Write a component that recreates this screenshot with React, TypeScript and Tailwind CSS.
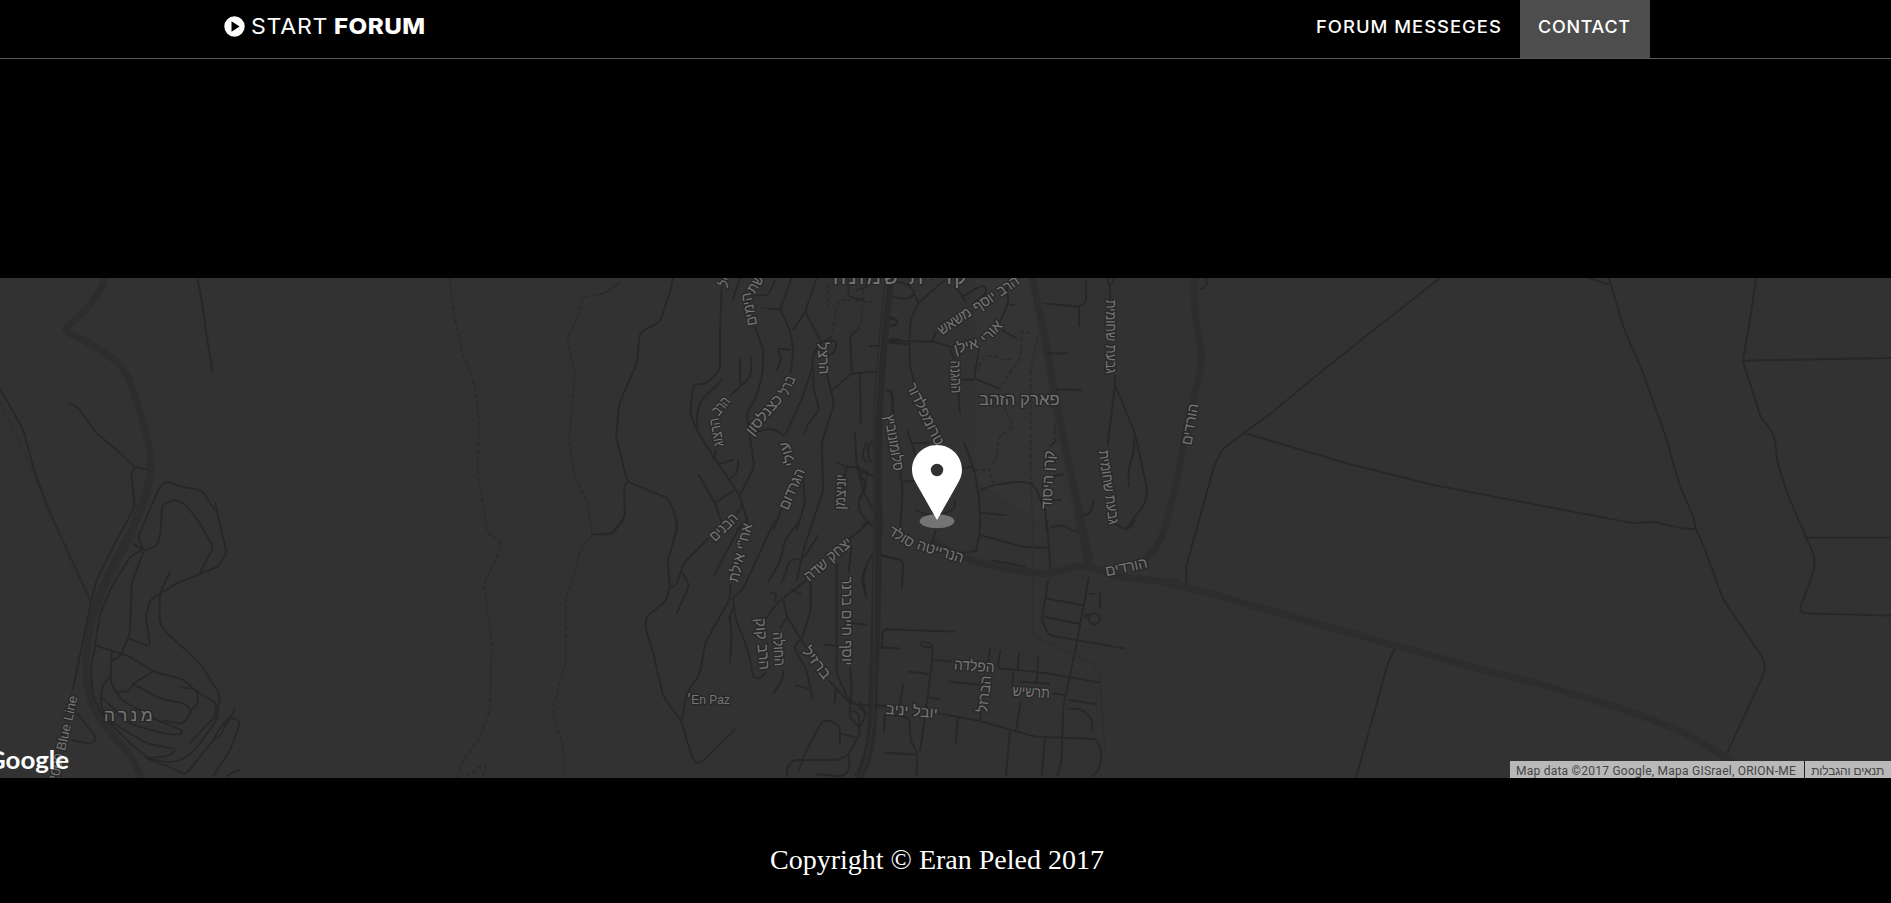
import React from "react";

type Road = { kind?: "thin" | "path" | "faint" | "main" | "trunk"; pts: string[] };
type Label = [text: string, x: number, y: number, rotation: number, length: number, size?: number];
type Tile = { x: number; y: number; roads: Road[]; labels: Label[] };

/** Turns "x,y x,y ..." into a path whose corners are softened. */
function soften(points: string, radius = 26): string {
  const p = points.trim().split(/\s+/).map((s) => s.split(",").map(Number));
  let d = `M${p[0][0]} ${p[0][1]}`;
  for (let i = 1; i < p.length - 1; i++) {
    const [a, b, c] = [p[i - 1], p[i], p[i + 1]];
    const la = Math.hypot(a[0] - b[0], a[1] - b[1]) || 1;
    const lc = Math.hypot(c[0] - b[0], c[1] - b[1]) || 1;
    const ra = Math.min(la / 2, radius) / la;
    const rc = Math.min(lc / 2, radius) / lc;
    d += `L${b[0] + (a[0] - b[0]) * ra} ${b[1] + (a[1] - b[1]) * ra}`;
    d += `Q${b[0]} ${b[1]} ${b[0] + (c[0] - b[0]) * rc} ${b[1] + (c[1] - b[1]) * rc}`;
  }
  const e = p[p.length - 1];
  return d + `L${e[0]} ${e[1]}`;
}

const STYLE = {
  thin: { stroke: "#272727", strokeWidth: 5.5, dash: undefined, r: 14 },
  path: { stroke: "#292929", strokeWidth: 4, dash: "13 8", r: 14 },
  faint: { stroke: "#2e2e2e", strokeWidth: 4, dash: undefined, r: 14 },
  main: { stroke: "#2d2d2d", strokeWidth: 21, dash: undefined, r: 60 },
  trunk: { stroke: "#2a2a2a", strokeWidth: 28, dash: undefined, r: 80 },
} as const;

const TILES: Tile[] = [
  {
    x: 0,
    y: 270,
    roads: [
      { kind: "main", pts: ["320,10 300,65 240,140 195,170 200,188 290,230 370,290 405,370 440,500 452,540 450,640 400,770 320,920 280,1020 262,1120 255,1220 275,1310 330,1390 390,1450 425,1525", "452,540 450,650 395,790 320,930 282,1030"] },
      {
        pts: [
          "592,24 605,90 622,210 638,306",
          "0,355 70,480 105,610 155,740 270,990",
          "203,399 235,412 285,485 350,540 405,592 440,598",
          "405,592 393,610 405,710 350,810 290,930 272,1000 235,1180 218,1260",
          "415,800 440,740 480,650 500,632 540,650 605,660 645,722",
          "645,698 655,740 680,850 655,890 530,940 450,990 437,1040 452,1130 385,1105",
          "415,800 430,843 470,828 482,790 486,705 520,688 555,700 600,760 640,832 598,912",
          "398,820 430,840 395,855 340,940 300,1030 285,1128 272,1200 280,1280 310,1340 380,1410 450,1470 520,1495 555,1515 640,1410",
          "430,845 395,940 390,1090 360,1160 335,1172",
          "510,905 480,970 478,1050 490,1080 600,1180 660,1275 650,1350 585,1440 545,1470 500,1478 440,1462",
          "285,1126 390,1160 460,1205 550,1228 590,1265 650,1300 645,1340 568,1420",
          "335,1140 332,1240 365,1290 470,1350 550,1382 540,1395 490,1390 390,1362 305,1282",
          "460,1205 400,1240 385,1265 350,1265",
          "395,1240 480,1285 560,1302 575,1325 550,1362 490,1352",
          "540,1252 590,1258 595,1300 570,1325",
          "330,1220 310,1240 300,1290 315,1345 440,1420 530,1438 510,1458 440,1465",
          "232,1330 290,1405 275,1422 215,1410",
          "640,1410 655,1380 690,1340 722,1355 690,1440 640,1518",
          "640,1405 655,1405 705,1318",
          "680,1520 695,1508 720,1500",
        ],
      },
      { kind: "faint", pts: ["0,395 80,560 150,735 265,985", "218,1260 205,1290"] },
    ],
    labels: [["מנרה", 385, 1336, 0, 146, 52], ["2000 Blue Line", 190, 1408, -77, 268, 40]],
  },
  {
    x: 420,
    y: 270,
    roads: [
      {
        kind: "path",
        pts: [
          "88,24 105,150 125,240 165,350 178,460 172,600 203,790 248,822 192,940 215,1120 210,1320 180,1400 125,1480 112,1524",
          "600,35 550,72 490,80 480,125 442,205 465,310 447,510 465,620 500,690 517,794",
          "517,794 482,835 465,910 438,980 437,1180 400,1310 400,1345 428,1420 435,1524",
          "140,1520 185,1485 200,1490 188,1520",
        ],
      },
      { pts: ["517,793 575,793 615,740 612,650 622,636"] },
    ],
    labels: [],
  },
  {
    x: 600,
    y: 270,
    roads: [
      { kind: "trunk", pts: ["868,20 850,200 832,440 833,800"] },
      {
        pts: [
          "218,24 212,60 180,155 120,188 110,280 58,400 48,500 82,635 205,685 225,730 232,790",
          "365,50 360,180 360,300 320,340 280,345 270,430 290,480 340,560 415,670 440,745 445,780",
          "365,330 300,395 290,440 292,485",
          "420,265 420,345", "455,260 452,320 390,378",
          "465,170 490,240 488,310 470,380 440,430 448,490 463,590 420,675",
          "448,490 515,475 555,498 610,375 635,300 640,250 665,218",
          "355,583 402,568", "415,568 412,608 385,630", "345,538 348,560 338,565",
          "295,612 345,700 365,760", "345,698 400,662",
          "575,24 540,118 570,180 580,240 572,310",
          "460,76 505,76 525,30", "500,115 540,118", "420,24 398,90",
          "650,24 615,125 665,218", "615,125 580,180",
          "530,300 545,270 530,235 570,240",
          "640,290 640,355 658,420 625,460 612,492",
          "678,215 710,210 706,245 680,260", "680,310 702,400 665,520 670,660 630,780",
          "695,362 755,310 830,305", "755,305 750,195 780,175", "665,218 695,200",
          "780,310 782,460", "765,485 770,590 820,618", "708,575 740,592 770,590",
          "745,30 745,80 790,90", "770,60 795,55 810,30",
          "770,590 800,650 775,690 780,730 820,772", "740,592 730,640", "775,595 788,660 835,750",
          "820,510 803,530 808,575 822,578", "860,360 878,365 880,440", "808,228 850,228",
          "610,625 615,700 590,780", "545,715 520,780", "430,700 380,780", "445,745 410,780",
          "870,145 892,150 890,165 872,168", "868,205 900,210", "868,215 900,219",
        ],
      },
      { kind: "path", pts: ["10,72 65,35", "685,40 685,110", "790,60 785,150 775,175", "820,96 715,88 695,195", "460,108 500,115"] },
    ],
    labels: [
      ["יל", 375, 37, -62, 30],
      ["שת", 466, 42, -58, 54],
      ["הימים", 447, 118, -102, 100],
      ["הרצל", 670, 265, 87, 96],
      ["ברל", 562, 346, -68, 58],
      ["כצנלסון", 492, 434, -50, 144],
      ["הרב", 363, 408, -50, 58],
      ["הרצוג", 349, 487, -100, 86],
      ["עולי", 562, 552, -106, 74],
      ["הגרדום", 576, 657, -66, 130],
      ["יוניצמן", 722, 666, -88, 106],
      ["סלומונוביץ", 882, 518, 80, 170],
      ["הבנים", 371, 771, -44, 100],
    ],
  },
  {
    x: 600,
    y: 520,
    roads: [
      { kind: "trunk", pts: ["833,-10 828,300 818,560 815,650 800,720 775,775"] },
      {
        pts: [
          "0,42 35,42 70,0", "232,0 230,30 202,125 210,200 200,240 140,290 135,320 160,400 190,530 245,605 275,710 290,733 310,722 407,627",
          "245,605 260,520 300,460 315,370 390,235 392,190",
          "325,55 250,130 230,195 210,202", "245,155 268,195 230,280",
          "420,20 342,165", "525,0 430,205 395,238", "400,238 405,290 440,380 455,440 458,470 480,478 500,455",
          "388,285 395,340 390,428", "400,262 386,295",
          "600,0 555,60 540,125 505,185", "655,45 610,115 570,120 545,190", "640,0 610,90 590,185",
          "810,5 745,60", "620,180 530,250 495,300", "575,208 605,225", "512,218 530,222 525,245",
          "550,240 560,290 605,360 620,385", "632,180 632,270 605,360 582,375 590,400 620,450 637,535",
          "560,295 540,325", "550,450 548,480 520,520", "585,495 625,505",
          "710,130 710,460 745,540 770,555 900,558", "685,480 750,550", "755,80 745,160", "750,440 755,500 748,590 778,622",
          "708,505 703,550", "675,375 712,376", "752,308 800,315",
          "800,140 785,180 800,235", "845,105 900,118", "900,328 848,328 845,380", "830,380 900,386",
          "775,560 800,580", "748,575 775,575 780,640 745,705 715,720 580,720 562,740 560,772",
          "595,755 615,700 665,605 690,600 720,620 720,670", "720,640 765,652", "745,705 750,745 730,770 645,762",
          "855,580 852,635", "855,698 900,702", "785,15 805,5",
        ],
      },
    ],
    labels: [
      ['אח"י אילת', 421, 98, -76, 180],
      ["הרב קוק", 487, 372, 85, 156],
      ["החולה", 536, 387, 87, 102],
      ["ברזיל", 650, 428, 52, 110],
      ["יצחק שדה", 684, 118, -41, 174],
      ["יוסף חיים ברנר", 742, 303, 90, 266],
      ["׳En Paz", 325, 538, 0, 130, 39],
    ],
  },
  {
    x: 860,
    y: 270,
    roads: [
      { kind: "main", pts: ["515,20 545,150 595,430 650,690 690,870"] },
      {
        pts: [
          "255,30 175,98 152,150 148,215 150,290 165,345", "95,30 150,45 175,98", "95,80 135,88 158,80 165,60",
          "85,212 225,215 285,235", "85,218 148,222", "215,215 228,185",
          "285,45 320,100", "305,80 350,55 375,45 380,70 345,95", "440,40 445,100 415,165", "445,103 465,105", "425,180 470,205",
          "270,240 285,270", "358,235 342,325 418,355", "300,330 345,328", "295,365 300,430",
          "90,140 115,150 110,165 92,168", "75,360 95,365 98,440", "20,0 20,50",
          "550,100 660,110 678,98 678,30", "657,112 657,170", "560,250 622,250", "590,358 665,360",
          "740,24 750,50 750,90", "765,24 750,50", "765,312 765,345 742,530", "765,345 825,490 862,660 855,700 800,775",
          "825,490 820,550 805,600 807,650", "140,480 160,530 165,560", "155,520 210,518", "120,600 128,660 120,780",
          "130,635 170,632", "312,515 345,610 358,690 360,780", "305,595 335,590", "358,662 400,645 480,635 515,640 535,668 545,700",
          "362,728 440,736", "285,690 282,720 220,740 165,720", "558,690 605,690", "580,618 610,612", "655,738 690,732 702,690",
          "590,510 570,530", "555,712 560,780", "20,515 5,560 20,578", "0,605 40,620", "20,620 0,690",
        ],
      },
      {
        kind: "path",
        pts: [
          "512,190 485,180 482,265 455,300 418,355 440,430 462,470 415,500 412,560 385,600 400,640",
          "455,265 430,272 400,255 370,260 355,300", "512,300 512,640", "585,460 585,510", "345,600 385,600",
        ],
      },
      { kind: "faint", pts: ["535,190 512,300", "512,640 520,780"] },
    ],
    labels: [
      ["קריית שמונה", 119, 23, 0, 400, 62],
      ["הרב יוסף", 408, 72, -34, 157],
      ["משאש", 283, 153, -34, 112],
      ["אילן", 318, 228, -16, 74],
      ["אורי", 394, 185, -47, 74],
      ["ההגנה", 287, 321, 88, 98],
      ["טרומפלדור", 196, 432, 64, 202],
      ["פארק הזהב", 478, 389, 0, 242, 49],
      ["קרן היסוד", 564, 630, -87, 176],
      ["גבעת שחומית", 753, 200, 90, 222],
      ["גבעת שחומית", 746, 652, 82, 224],
    ],
  },
  {
    x: 860,
    y: 520,
    roads: [
      { kind: "main", pts: ["210,60 310,115 420,145 570,165 640,138 690,140 760,168 850,180 960,187"] },
      { kind: "main", pts: ["650,-60 665,40 685,140"] },
      {
        pts: [
          "230,20 215,75", "360,0 358,45 348,95", "300,100 348,92", "360,45 485,80 565,84", "560,0 572,150", "570,22 615,15 632,32 655,34",
          "395,122 498,140", "65,108 130,122 126,205", "35,105 8,160 18,225",
          "565,180 545,300 565,345 795,386", "555,234 668,256", "552,290 660,312", "687,170 665,290 650,370 610,560 605,720 592,770",
          "685,222 705,222", "720,218 720,265", "672,282 692,287", "672,290 690,297",
          "703,279 716,284 721,297 716,309 703,314 690,309 685,297 690,284 705,279",
          "65,385 68,328 285,335", "60,382 118,386", "217,420 217,370 182,365 185,380 212,382", "217,418 275,425",
          "217,418 203,530 180,695", "145,455 205,462", "130,490 120,555", "205,532 242,538", "268,485 360,495",
          "390,385 385,425", "422,390 412,445 475,450 560,460 722,488", "478,398 472,450", "535,408 530,490", "460,455 458,500",
          "480,485 570,492", "578,520 618,525", "482,545 468,630", "625,540 712,553", "620,566 665,568 695,595 697,632",
          "50,556 80,560", "235,580 355,602 525,650 710,657 725,700 720,745 695,770", "362,575 360,600",
          "450,632 438,770", "555,657 545,770", "293,592 288,670", "75,580 72,638", "78,580 148,595 152,665 172,695 170,770", "75,698 170,704",
          "760,5 790,28 810,25 825,0", "0,545 20,580 0,620",
        ],
      },
      { kind: "faint", pts: ["520,0 520,350 590,380 700,430 720,470 735,690"] },
    ],
    labels: [
      ["סולד", 124, 50, 32, 82],
      ["הנרייטה", 241, 94, 17, 144],
      ["הורדים", 799, 141, -12, 128],
      ["הפלדה", 343, 438, 4, 122],
      ["הברזל", 373, 522, -84, 110],
      ["תרשיש", 514, 516, 4, 112],
      ["יובל יניב", 155, 573, 5, 156],
    ],
  },
  {
    x: 1140,
    y: 270,
    roads: [
      { kind: "main", pts: ["162,20 165,150 185,230 182,310 150,420 105,660 65,810 30,855 0,885"] },
      { kind: "main", pts: ["80,941 130,949 1080,1214 1200,1242 1340,1284 1500,1335 1630,1385 1780,1475"] },
      { pts: ["900,24 720,165 500,340 400,425 310,490 245,540 222,590 138,890 140,940", "310,488 620,580 880,645 1080,683 1200,706", "765,1136 745,1175 648,1524", "200,24 200,50 180,58"] },
    ],
    labels: [["הורדים", 150, 463, -80, 126]],
  },
  {
    x: 1500,
    y: 270,
    roads: [
      {
        pts: [
          "255,20 327,44", "325,20 375,185 430,310 500,510 540,650 580,740 587,777 612,830 670,990 790,1165 795,1190 790,1215 682,1448",
          "120,706 395,759 465,756 550,776 587,777",
          "768,24 750,150 728,272 785,450 812,475 825,510 833,580 862,670 918,802 940,850 945,885 932,930 898,1018 908,1030 1175,1037",
          "728,272 1175,264", "918,803 1175,803",
        ],
      },
    ],
    labels: [],
  },
];

function MapTile({ tile }: { tile: Tile }) {
  return (
    <g transform={`translate(${tile.x} ${tile.y}) scale(0.33333)`}>
      {tile.roads.map((road, i) => {
        const s = STYLE[road.kind ?? "thin"];
        return road.pts.map((pts, j) => (
          <path key={`${i}-${j}`} d={soften(pts, s.r)} fill="none" stroke={s.stroke} strokeWidth={s.strokeWidth} strokeDasharray={s.dash} strokeLinejoin="round" />
        ));
      })}
    </g>
  );
}

function TileLabels({ tile }: { tile: Tile }) {
  return (
    <g transform={`translate(${tile.x} ${tile.y}) scale(0.33333)`}>
      {tile.labels.map(([text, x, y, rotation, length, size = 45]) => (
        <text
          key={`${text}${x}`}
          transform={`translate(${x} ${y}) rotate(${rotation})`}
          dy={size * 0.33}
          textAnchor="middle"
          textLength={length}
          lengthAdjust={size >= 50 ? "spacing" : "spacingAndGlyphs"}
          fontSize={size}
          fill="#757575"
          stroke="#292929"
          strokeWidth={9}
          strokeLinejoin="round"
          paintOrder="stroke"
        >
          {text}
        </text>
      ))}
    </g>
  );
}

function StreetMap() {
  return (
    <svg viewBox="0 278 1891 500" className="block h-[500px] w-full font-['Liberation_Sans',Arial,sans-serif]" preserveAspectRatio="xMinYMin slice">
      <rect y="278" width="1891" height="500" fill="#323232" />
      <path d="M975 278H1030L1055 430L1075 520L1035 520L975 480Z" fill="#343434" />
      {TILES.map((tile, i) => (
        <MapTile key={i} tile={tile} />
      ))}
      <path d="M886 285Q878 360 874 430V690Q874 745 860 778" fill="none" stroke="#353535" strokeWidth="1" />
      {TILES.map((tile, i) => (
        <TileLabels key={i} tile={tile} />
      ))}
      <ellipse cx="937" cy="521.3" rx="17.3" ry="7" fill="#747474" />
      <path fill="#fff" fillRule="evenodd" d="M937 445c-14 0-25 11-25 25 0 5 1.800 9 4 13l21 37 21-37c2.200-4 4-8 4-13 0-14-11-25-25-25Zm0 18.800a6.200 6.200 0 1 1 0 12.400a6.200 6.200 0 0 1 0-12.400Z" />
    </svg>
  );
}

export default function App() {
  return (
    <div className="flex h-[903px] w-full flex-col overflow-hidden bg-black text-white">
      <header className="h-[59px] shrink-0 border-b border-[#595959]">
        <div className="ml-[224px] flex h-[58px] w-[1426px] justify-between font-['Inter',sans-serif]">
          <a className="flex h-[52px] items-center">
            <svg viewBox="0 0 21 21" className="size-[21px]">
              <path fill="#fff" fillRule="evenodd" d="M10.500 .3a10.200 10.200 0 1 1 0 20.400a10.200 10.200 0 0 1 0-20.400ZM7.500 5.200V15.800L15.600 10.500Z" />
            </svg>
            <span className="ml-[6px] w-[83px] origin-left scale-x-[1.05] text-[22px] leading-none tracking-[0.7px]">START</span>
            <span className="origin-left scale-x-[1.1] text-[22px] leading-none font-extrabold tracking-[0.4px]">FORUM</span>
          </a>
          <nav className="flex text-[17px] font-medium">
            <a className="flex w-[222px] items-center pb-[3px] pl-[18px] tracking-[0.9px] whitespace-nowrap">
              <span className="origin-left scale-x-[1.085]">FORUM MESSEGES</span>
            </a>
            <a className="flex w-[130px] items-center bg-[#4d4d4d] pb-[3px] pl-[18px] tracking-[0.7px]">
              <span className="origin-left scale-x-[1.055]">CONTACT</span>
            </a>
          </nav>
        </div>
      </header>
      <main className="relative mt-[219px] h-[500px] shrink-0 overflow-hidden bg-[#323232]">
        <StreetMap />
        <svg viewBox="0 0 72 40" className="absolute bottom-0 left-0 h-[40px] w-[72px]">
          <text x="-13" y="31" textLength="82" lengthAdjust="spacingAndGlyphs" className="font-['Lato',sans-serif] text-[24px] font-bold" fill="#fff">
            Google
          </text>
        </svg>
        <div className="absolute right-0 bottom-0 flex h-[17px] w-[381px] bg-[#b9b9b9] font-['Roboto',sans-serif] text-[12px] leading-[20px] whitespace-nowrap text-[#444]">
          <span className="w-[295px] border-r border-[#222] pl-[6px] tracking-[0.24px]">Map data ©2017 Google, Mapa GISrael, ORION-ME</span>
          <span dir="rtl" className="flex-1 pr-[7px] font-['Liberation_Sans',sans-serif] tracking-[-0.2px]">תנאים והגבלות</span>
        </div>
      </main>
      <footer className="flex justify-center pt-[66px] pr-[17px] font-['Liberation_Serif',serif] text-[28px] leading-[32px]">
        <p>Copyright © Eran Peled 2017</p>
      </footer>
    </div>
  );
}
